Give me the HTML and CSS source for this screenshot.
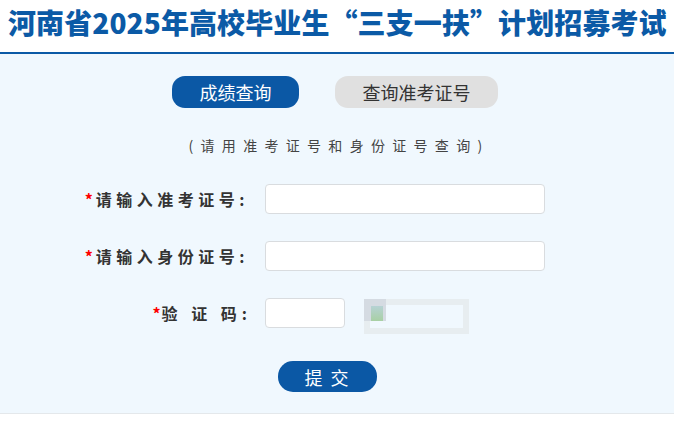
FILE: index.html
```html
<!DOCTYPE html>
<html lang="zh-CN">

<head>
    <meta charset="UTF-8">
    <meta name="viewport" content="width=device-width, initial-scale=1.0">
    <title>成绩查询</title>
    <link rel="stylesheet" href="styles.css">
</head>

<body>
    <div class="header">
        <h1>河南省2025年高校毕业生“三支一扶”计划招募考试</h1>
    </div>
    <div class="main">
        <div class="tabs">
            <a class="tab now">成绩查询</a>
            <a class="tab tab-wide">查询准考证号</a>
        </div>
        <p class="tip">(请用准考证号和身份证号查询)</p>
        <form class="form">
            <div class="row">
                <label class="label"><i>*</i>请输入准考证号:</label>
                <input class="ipt" type="text">
            </div>
            <div class="row">
                <label class="label"><i>*</i>请输入身份证号:</label>
                <input class="ipt" type="text">
            </div>
            <div class="row">
                <label class="label code-label"><i>*</i>验 证 码:</label>
                <input class="ipt ipt-code" type="text">
                <div class="code-img"><span class="broken"></span></div>
            </div>
            <div class="btn-row">
                <button class="btn" type="button">提 交</button>
            </div>
        </form>
    </div>
</body>

</html>
```

FILE: styles.css
```css
body,
div,
h1,
p,
form {
    margin: 0;
    padding: 0;
}

body {
    background: #fff;
    font-family: "Noto Sans CJK SC", "Liberation Sans", sans-serif;
    color: #333;
}

.header {
    height: 52px;
    border-bottom: 2px solid #0b5aa6;
}

.header h1 {
    padding-left: 8px;
    font-size: 28px;
    line-height: 44px;
    font-weight: 900;
    color: #0b5aa6;
    letter-spacing: 0.1px;
    white-space: nowrap;
}

.main {
    background: #f0f8fe;
    padding: 22px 0 21px;
    border-bottom: 1px solid #e4e8eb;
}

.tabs {
    display: flex;
    justify-content: center;
    gap: 36px;
    padding-right: 4px;
}

.tab {
    display: block;
    width: 127px;
    height: 32px;
    line-height: 32px;
    text-align: center;
    border-radius: 13px;
    background: #e0e0e0;
    color: #333;
    font-size: 18px;
    cursor: pointer;
}

.tab-wide {
    width: 163px;
}

.tab.now {
    background: #0b58a5;
    color: #fff;
}

.tip {
    margin-top: 27px;
    text-align: center;
    font-size: 14px;
    line-height: 20px;
    letter-spacing: 7.3px;
    color: #444;
    padding-left: 4px;
}

.form {
    margin-top: 29px;
}

.row {
    display: flex;
    align-items: center;
    height: 30px;
    margin-bottom: 27px;
}

.label {
    flex: none;
    width: 265px;
    padding-right: 16px;
    box-sizing: border-box;
    text-align: right;
    font-size: 16px;
    font-weight: bold;
    letter-spacing: 4.5px;
    color: #333;
    white-space: pre;
}

.label i {
    font-style: normal;
    color: #f00;
    letter-spacing: 3px;
}

.code-label {
    letter-spacing: 5px;
    padding-right: 13px;
}

.code-label i {
    letter-spacing: 1px;
}

.ipt {
    flex: none;
    width: 280px;
    height: 30px;
    box-sizing: border-box;
    border: 1px solid #d9dcdf;
    border-radius: 4px;
    background: #fff;
    outline: none;
}

.ipt-code {
    width: 80px;
}

.code-img {
    margin-left: 19px;
    margin-top: 7px;
    width: 105px;
    height: 35px;
    box-sizing: border-box;
    border: 6px solid #e7edf0;
    position: relative;
}

.code-img .broken {
    position: absolute;
    left: -6px;
    top: -6px;
    width: 22px;
    height: 22px;
    background: #d5dbe2;
}

.code-img .broken::after {
    content: "";
    position: absolute;
    left: 7px;
    top: 7px;
    width: 12px;
    height: 15px;
    background: linear-gradient(#b6d2d4, #a8d0a4);
}

.btn-row {
    padding-left: 278px;
    margin-top: 33px;
}

.btn {
    width: 99px;
    height: 31px;
    border: none;
    border-radius: 15px;
    background: #0b58a5;
    color: #fff;
    font-family: "Noto Sans CJK SC", sans-serif;
    font-size: 18px;
    letter-spacing: 2px;
    cursor: pointer;
}
```
